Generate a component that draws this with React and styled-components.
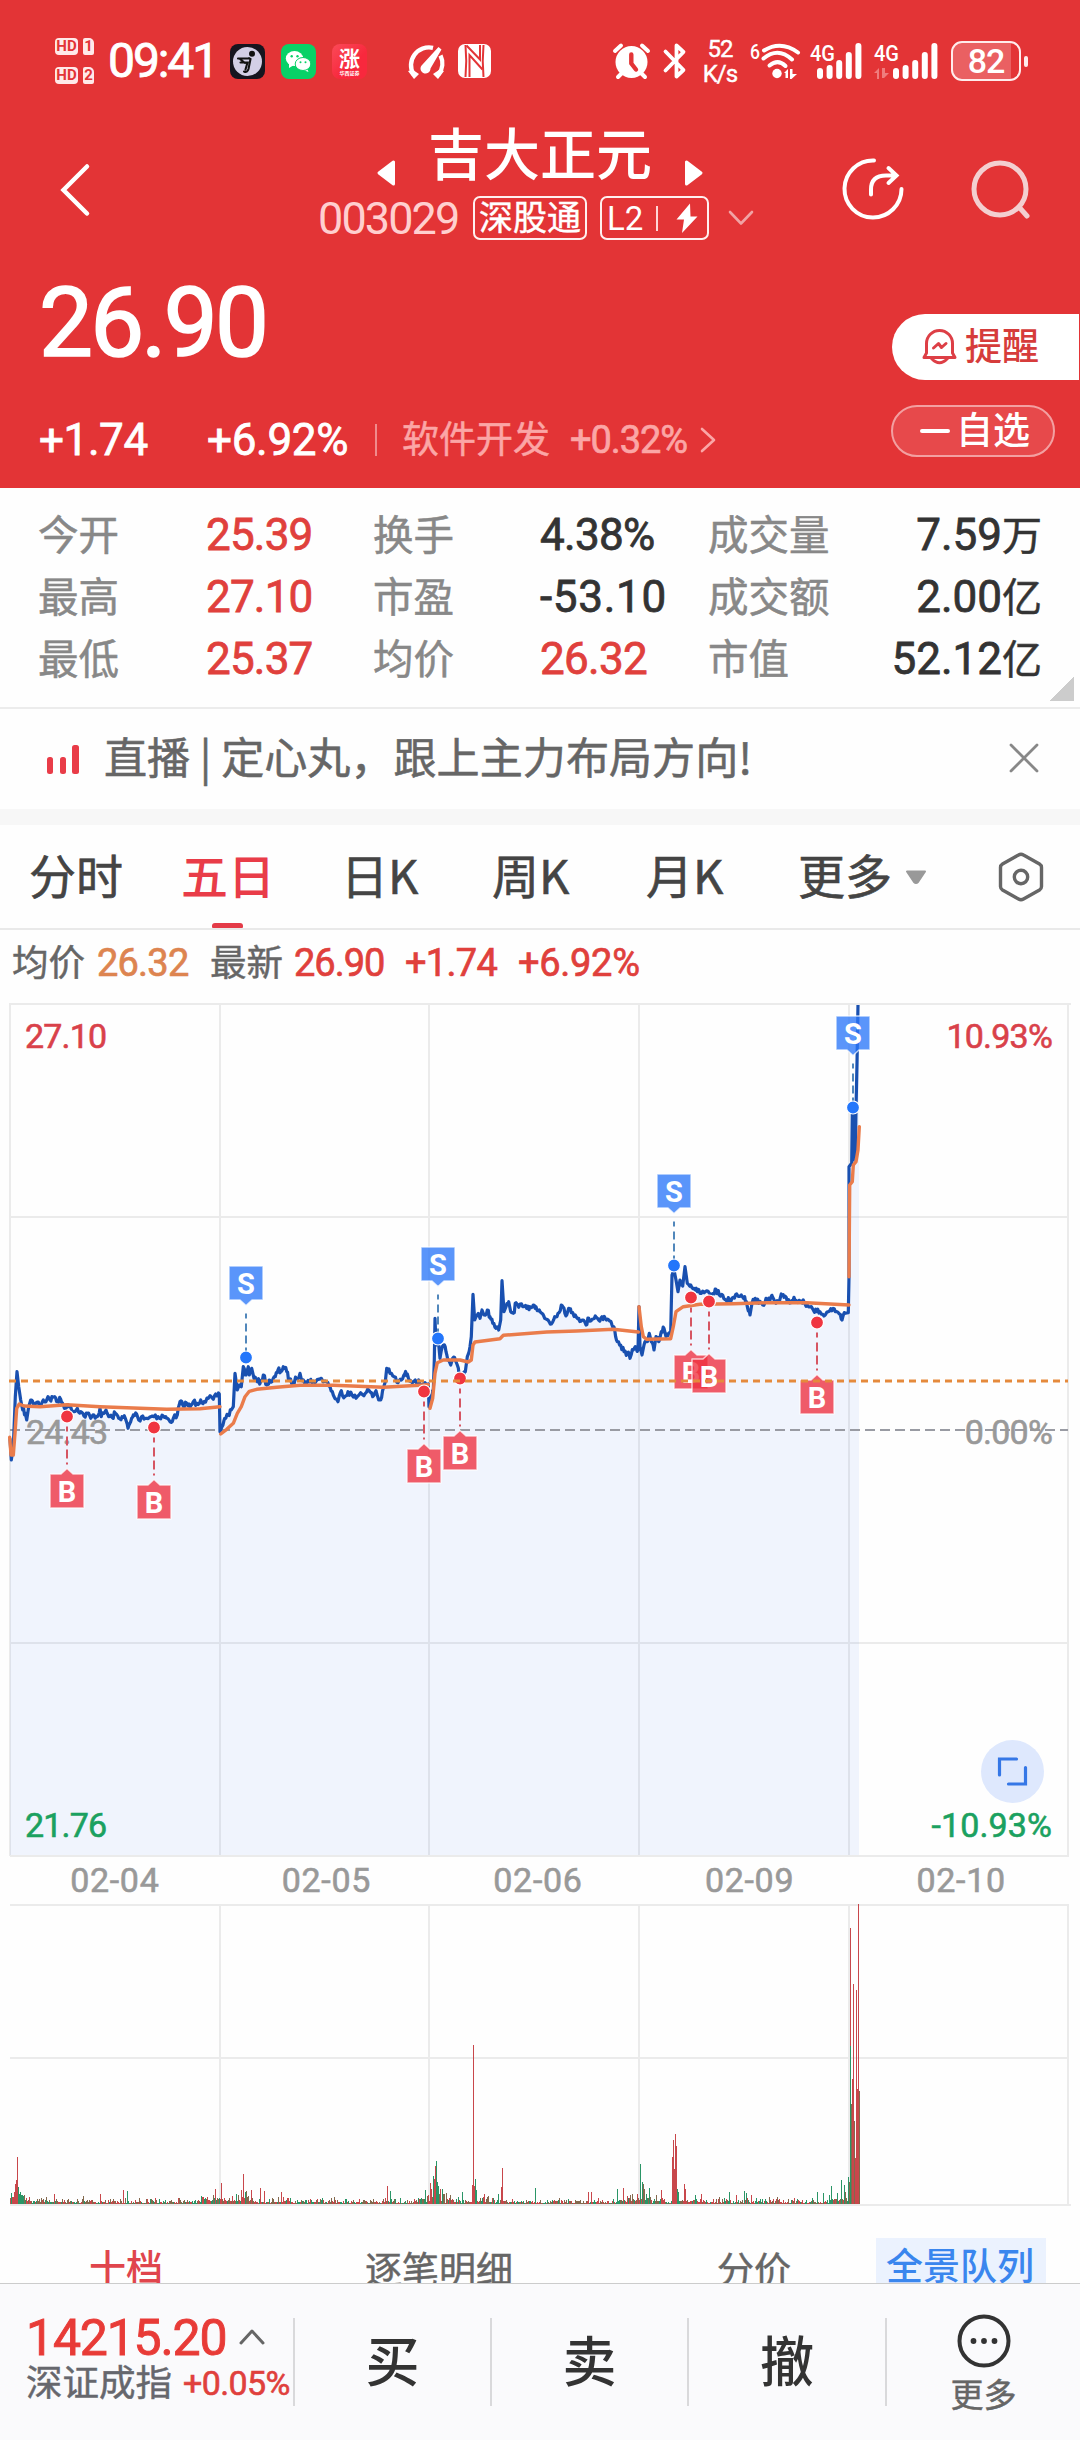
import React from 'react';
import styled, { createGlobalStyle } from 'styled-components';

const RED = '#e33436';

const GlobalStyle = createGlobalStyle`
    body {
        margin : 0;
        background : #fefefe;
        font-family : "Noto Sans CJK SC", sans-serif;
    }
    svg {
        display : block;
        flex : none;
        overflow : visible;
    }
`

const Page = styled('div')`
    width : 1080px;
    height : 2440px;
    display : flex;
    flex-direction : column;
    overflow : hidden;
`

/* digits, the thin stroke gives a weight between regular and medium */
const Num = styled('span')`
    display : block;
    flex : none;
    font-family : Roboto, sans-serif;
    font-weight : ${p => p.$weight || 400};
    font-size : ${p => p.$size}px;
    letter-spacing : ${p => p.$ls || 0}px;
    line-height : 1;
    white-space : nowrap;
    color : ${p => p.$color || 'inherit'};
    -webkit-text-stroke : ${p => p.$weight ? 0 : '0.018em'};
`

/* chinese text, the padding pulls the glyphs back to the middle of the line */
const Han = styled('span')`
    display : block;
    flex : none;
    font-weight : ${p => p.$weight || 400};
    font-size : ${p => p.$size}px;
    line-height : 1;
    padding-bottom : 0.11em;
    white-space : nowrap;
    color : ${p => p.$color || 'inherit'};
    -webkit-text-stroke : ${p => p.$weight ? 0 : '0.013em'};
`

const Header = styled('div')`
    height : 488px;
    flex : none;
    background : ${RED};
    color : #fff;
    display : flex;
    flex-direction : column;
`
const StatusBar = styled('div')`
    height : 122px;
    flex : none;
    display : flex;
    justify-content : space-between;
    align-items : center;
    padding : 0 52px 0 55px;
`
const StatusGroup = styled('div')`
    display : flex;
    align-items : center;
`
const SimStack = styled('div')`
    display : flex;
    flex-direction : column;
    gap : 12px;
    width : 53px;
`
const SimLine = styled('div')`
    display : flex;
    gap : 5px;
    color : ${RED};
    font : 700 15px/17px Roboto, sans-serif;
    text-align : center;
`
const HdTag = styled('span')`
    width : 23px;
    height : 17px;
    border-radius : 4px;
    background : #ffe9e9;
`
const SimTag = styled('span')`
    width : 11px;
    height : 17px;
    border-radius : 2px 5px 2px 2px;
    background : #ffe9e9;
`
const Clock = styled('div')`
    width : 122px;
`
const AppIcons = styled('div')`
    display : flex;
    gap : 16px;
    width : 175px;
`
const NfcBox = styled('div')`
    margin-left : 11px;
`
const BtBox = styled('div')`
    margin-left : 13px;
`
const SignalBox = styled('div')`
    margin : 0 12px 0 9px;
`
const Speed = styled('div')`
    display : flex;
    flex-direction : column;
    align-items : center;
    gap : 1px;
    width : 36px;
    margin : 0 12px 0 15px;
`
const Battery = styled('div')`
    width : 66px;
    height : 36px;
    margin-left : 12px;
    border : 2px solid #ffecec;
    border-radius : 11px;
    display : flex;
    align-items : center;
    justify-content : center;
    background : linear-gradient(to right, #ea6062 88%, ${RED} 88%);
`
const BatteryTip = styled('div')`
    width : 4px;
    height : 11px;
    margin-left : 3px;
    border-radius : 2px;
    background : #ffecec;
`

const TitleBar = styled('div')`
    height : 134px;
    flex : none;
    display : grid;
    grid-template-columns : 318px 524px 1fr;
`
const BackCell = styled('div')`
    padding : 41px 0 0 59px;
`
const TitleCell = styled('div')`
    display : flex;
    flex-direction : column;
`
const NameRow = styled('div')`
    height : 74px;
    width : 444px;
    display : flex;
    justify-content : center;
    gap : 33px;
`
const NameArrow = styled('div')`
    padding-top : 38px;
`
const NameText = styled('div')`
    padding-top : 1px;
`
const CodeRow = styled('div')`
    display : flex;
    align-items : center;
    height : 44px;
`
const CodeBox = styled('div')`
    width : 155px;
`
const Badge = styled('div')`
    box-sizing : border-box;
    width : ${p => p.$w}px;
    height : 44px;
    margin-right : 13px;
    border : 2px solid #fff0f0;
    border-radius : 7px;
    display : flex;
    align-items : center;
    justify-content : ${p => p.$between ? 'space-between' : 'center'};
    padding : 0 ${p => p.$between ? '9px 0 5px' : 0};
`
const BadgeLine = styled('div')`
    width : 2px;
    height : 25px;
    background : #ffd6d6;
    margin-right : 5px;
`
const DownBox = styled('div')`
    margin-left : 5px;
`
const ActionCell = styled('div')`
    display : flex;
    gap : 66px;
    padding-top : 36px;
`

const Quote = styled('div')`
    flex : 1;
    display : flex;
    justify-content : space-between;
`
const QuoteLeft = styled('div')`
    padding : 19px 0 0 39px;
`
const ChangeRow = styled('div')`
    display : grid;
    grid-template-columns : 168px 168px 27px 168px 129px 20px;
    align-items : center;
    height : 50px;
    margin-top : 44px;
`
const ThinLine = styled('div')`
    width : 2px;
    height : 32px;
    background : #f08b8c;
`
const QuoteRight = styled('div')`
    width : 189px;
    padding-top : 58px;
`
const AlertPill = styled('div')`
    box-sizing : border-box;
    width : 187px;
    height : 66px;
    margin-left : 1px;
    padding-left : 30px;
    border-radius : 33px 0 0 33px;
    background : #fff;
    color : #d63c3b;
    display : flex;
    align-items : center;
    gap : 8px;
`
const WatchPill = styled('div')`
    box-sizing : border-box;
    width : 164px;
    height : 52px;
    margin-top : 25px;
    padding-left : 27px;
    border : 2px solid #f3a0a1;
    border-radius : 26px;
    background : #e7494b;
    display : flex;
    align-items : center;
    gap : 6px;
`
const Dash = styled('div')`
    width : 30px;
    height : 4px;
    border-radius : 2px;
    background : #fff;
`

const Stats = styled('div')`
    box-sizing : border-box;
    height : 221px;
    flex : none;
    padding : 16px 38px 0 38px;
    border-bottom : 2px solid #ececec;
    display : grid;
    grid-template-columns : 168px 167px 167px 168px 1fr;
    grid-auto-rows : 62px;
    align-items : center;
    position : relative;
`
const StatValue = styled('div')`
    display : flex;
    align-items : center;
    justify-content : ${p => p.$end ? 'flex-end' : 'flex-start'};
    color : ${p => p.$red ? '#e0403c' : '#333'};
`
const StatRight = styled('div')`
    display : flex;
    justify-content : space-between;
    align-items : center;
`
const Corner = styled('div')`
    position : absolute;
    right : 6px;
    bottom : 6px;
    width : 25px;
    height : 25px;
    background : linear-gradient(135deg, transparent 50%, #ccc 50%);
`

const Notice = styled('div')`
    height : 100px;
    flex : none;
    box-sizing : border-box;
    display : flex;
    align-items : center;
    padding : 0 41px 2px 46px;
    color : #666;
`
const NoticeText = styled('div')`
    flex : 1;
    padding-left : 24px;
`
const Band = styled('div')`
    height : 16px;
    flex : none;
    background : #f7f7f7;
`

const Tabs = styled('div')`
    box-sizing : border-box;
    height : 105px;
    flex : none;
    border-bottom : 2px solid #e9e9e9;
    display : grid;
    grid-template-columns : 152px 160px 151px 154px 152px 200px 46px;
    padding-left : 29px;
`
const Tab = styled('div')`
    display : flex;
    align-items : center;
    gap : 13px;
    height : 103px;
    color : ${p => p.$active ? '#e93c48' : '#444'};
    position : relative;
`
const TabMark = styled('div')`
    position : absolute;
    left : 31px;
    bottom : 0;
    width : 31px;
    height : 5px;
    border-radius : 3px 3px 1px 1px;
    background : #e43b48;
`

const Legend = styled('div')`
    height : 70px;
    flex : none;
    box-sizing : border-box;
    padding : 0 0 4px 12px;
    display : grid;
    grid-template-columns : 85px 113px 84px 111px 113px 1fr;
    align-items : center;
    color : #666;
`

const Dates = styled('div')`
    height : 46px;
    flex : none;
    width : 1058px;
    margin-left : 9px;
    padding-bottom : 1px;
    display : flex;
    align-items : center;
`
const DateLabel = styled('div')`
    flex : 1;
    display : flex;
    justify-content : center;
`

const DepthTabs = styled('div')`
    height : 76px;
    flex : none;
    overflow : hidden;
    display : grid;
    grid-template-columns : 276px 352px 159px 170px;
    padding-left : 89px;
    color : #666;
`
const DepthTab = styled('div')`
    padding-top : ${p => p.$top || 43}px;
`
const DepthHot = styled('div')`
    margin-top : 31px;
    padding : 8px 0 0 10px;
    background : #ebf2fe;
    color : #3a86ee;
`

const BottomBar = styled('div')`
    flex : 1;
    box-sizing : border-box;
    border-top : 1px solid #ccc;
    background : #fafafc;
    display : grid;
    grid-template-columns : 293px 197px 197px 198px 1fr;
`
const IndexCell = styled('div')`
    padding : 29px 0 0 26px;
`
const IndexRow = styled('div')`
    display : flex;
    align-items : center;
    height : ${p => p.$h}px;
`
const IndexValue = styled('div')`
    width : 212px;
`
const IndexName = styled('div')`
    width : 157px;
`
const TradeCell = styled('div')`
    height : 88px;
    margin-top : 34px;
    border-left : 2px solid #d9d9db;
    display : flex;
    flex-direction : column;
    align-items : center;
    justify-content : center;
    color : #333;
`
const MoreBox = styled('div')`
    display : flex;
    flex-direction : column;
    align-items : center;
    gap : 9px;
    padding-top : 3px;
    color : #666;
`

/* ---------- icons ---------- */

const RunnerIcon = () => (
    <svg width="35" height="35" viewBox="0 0 35 35">
        <rect width="35" height="35" rx="8" fill="#16151f" />
        <circle cx="17.5" cy="17.5" r="14.5" fill="#d3cfe6" />
        <circle cx="22" cy="9.8" r="3" fill="#111" />
        <path d="M8 14.500h10.500M19 14l1.500 1-2 10q-1.200 4-4.500 2.500M10.500 18.500h7l-2 7M10 15l5 4" fill="none" stroke="#111" strokeWidth="2.100" strokeLinecap="round" />
    </svg>
)

const WechatIcon = () => (
    <svg width="35" height="35" viewBox="0 0 35 35">
        <rect width="35" height="35" rx="8" fill="#08d167" />
        <ellipse cx="13.500" cy="14.500" rx="8.700" ry="7.400" fill="#fff" />
        <path d="M8 19v5l5-3zM26 24.500l1.500 3.500-5-2z" fill="#fff" />
        <ellipse cx="22" cy="20" rx="7.800" ry="6.500" fill="#fff" stroke="#08d167" strokeWidth="1" />
        <g fill="#08d167">
            <circle cx="10.700" cy="12.200" r="1.200" />
            <circle cx="16.500" cy="12.200" r="1.200" />
            <circle cx="19.500" cy="18.300" r="1" />
            <circle cx="24.500" cy="18.300" r="1" />
        </g>
    </svg>
)

const RiseTile = styled('div')`
    width : 35px;
    height : 35px;
    border-radius : 8px;
    background : linear-gradient(135deg, #fb4a58, #f8283d 60%);
    display : flex;
    flex-direction : column;
    align-items : center;
    font-weight : 700;
    font-size : 21px;
    line-height : 26px;
`
const RiseSmall = styled('span')`
    font-size : 5px;
    line-height : 5px;
    white-space : nowrap;
`

const GaugeIcon = () => (
    <svg width="42" height="37" viewBox="0 0 42 37">
        <path d="M8.500 31.500A18 18 0 0 1 28 4.800M35.500 12.500A18 18 0 0 1 33.500 31.500" fill="none" stroke="#fff" strokeWidth="4.400" />
        <path d="M3 28l6 8 5-5-6-4zM39 28l-6 8-5-5 6-4z" fill="#fff" />
        <path d="M33.500 4l3 2.500-11 19a5 5 0 1 1-8-4z" fill="#fff" />
    </svg>
)

const NfcIcon = () => (
    <svg width="33" height="34" viewBox="0 0 33 34">
        <rect width="33" height="34" rx="7" fill="#fff" />
        <path d="M7.500 1q1.500 16 0 32M25.500 1q-1.500 16 0 32" fill="none" stroke={RED} strokeWidth="2" />
        <path d="M11.500 33V11l13 14.500M8.500 1.500l13.500 14V1" fill="none" stroke={RED} strokeWidth="2" />
    </svg>
)

const AlarmIcon = () => (
    <svg width="37" height="36" viewBox="0 0 37 36">
        <circle cx="18.500" cy="19" r="16" fill="#fff" />
        <path d="M2 8l6-5.500M35 8l-6-5.500M5 34l4-4M32 34l-4-4" stroke="#fff" strokeWidth="4" strokeLinecap="round" />
        <path d="M18.300 11.500v9l4.700 6" fill="none" stroke={RED} strokeWidth="4.400" strokeLinecap="round" strokeLinejoin="round" />
    </svg>
)

const BluetoothIcon = () => (
    <svg width="24" height="36" viewBox="0 0 24 36">
        <path d="M2.500 8.500l18 18.500-7 6.500v-31l7 6.500-18 18.500" fill="none" stroke="#fff" strokeWidth="3.800" strokeLinejoin="round" strokeLinecap="round" />
    </svg>
)

const WifiIcon = () => (
    <svg width="51" height="38" viewBox="0 0 51 38">
        <text x="0" y="17" fontFamily="Roboto" fontSize="21" fontWeight="500" fill="#fff" textLength="10" lengthAdjust="spacingAndGlyphs">6</text>
        <g fill="none" stroke="#fff" strokeWidth="4" strokeLinecap="round">
            <path d="M14 8.500Q31-2 48 10.500" />
            <path d="M13.500 16.500Q28 4.500 42 17.500" />
            <path d="M19.500 23.500Q28 16.500 35.500 24" />
        </g>
        <circle cx="27" cy="31.500" r="4.700" fill="#fff" />
        <path d="M34 31l4-4v9h-2.500v-5zM40 27h2.500v5h4.500l-5.500 5h-1.500z" fill="#fff" />
    </svg>
)

const SignalIcon = ({ wide }) => {
    const off = wide ? 12 : 0;
    return (
        <svg width={wide ? 65 : 52} height="37" viewBox={`0 0 ${wide ? 65 : 52} 37`}>
            <text x="0" y="18" fontFamily="Roboto" fontSize="22" fontWeight="500" fill="#fff" textLength="25" lengthAdjust="spacingAndGlyphs">4G</text>
            {wide && <path d="M0 30l5-5v11H3v-6zM8 25h3v5h4l-5 5H8z" fill="#ef7c7d" />}
            {[11, 14, 19, 27, 36].map((h, i) => (
                <rect key={h} x={7 + off + i * 9.6} y={36 - h} width="6" height={h} rx="3" fill="#fff" />
            ))}
        </svg>
    );
}

const BackIcon = () => (
    <svg width="32" height="54" viewBox="0 0 32 54">
        <path d="M28 3.500L4.500 27 28 50.500" fill="none" stroke="#fff" strokeWidth="4.500" strokeLinecap="round" />
    </svg>
)

const TriangleIcon = ({ flip }) => (
    <svg width="18" height="26" viewBox="0 0 18 26">
        <path d={flip ? 'M1.500 2v22L16 13z' : 'M16.500 2v22L2 13z'} fill="#fff" stroke="#fff" strokeWidth="3" strokeLinejoin="round" />
    </svg>
)

const BoltIcon = () => (
    <svg width="22" height="31" viewBox="0 0 22 31">
        <path d="M14 .500L.500 16.500h7.500l-2 13.500L21.500 13.500h-7z" fill="#fff" />
    </svg>
)

const ShareIcon = () => (
    <svg width="62" height="62" viewBox="0 0 62 62">
        <g fill="none" stroke="#fff" strokeLinecap="round" strokeWidth="4">
            <path d="M32 2.500A28.500 28.500 0 1 0 59.500 31" />
            <path d="M29 36.500v-5q0-14 15-14h9M46.500 10l8 7.500-8 7.500" />
        </g>
    </svg>
)

const SearchIcon = () => (
    <svg width="62" height="62" viewBox="0 0 62 62">
        <circle cx="30" cy="31" r="26" fill="none" stroke="#f3cfd0" strokeWidth="5" />
        <path d="M49 49l8 9" stroke="#f3cfd0" strokeWidth="5" strokeLinecap="round" />
    </svg>
)

const BellIcon = () => (
    <svg width="35" height="36" viewBox="0 0 35 36">
        <g fill="none" stroke="#dd3f46" strokeWidth="3" strokeLinejoin="round" strokeLinecap="round">
            <path d="M4.500 24V14.500a13 13 0 0 1 26 0V24l2.500 4.500H2z" />
            <path d="M9.500 29.500q8 8.500 16 0" />
            <path d="M11.500 19l5-4.500 3 4 4.500-4" />
        </g>
    </svg>
)

const Chevron = ({ w, h, d, color, sw }) => (
    <svg width={w} height={h} viewBox={`0 0 ${w} ${h}`}>
        <path d={d} fill="none" stroke={color} strokeWidth={sw} strokeLinecap="round" strokeLinejoin="round" />
    </svg>
)

const LiveIcon = () => (
    <svg width="34" height="30" viewBox="0 0 34 30">
        <g fill="#e93c48">
            <rect x="1" y="14" width="6" height="17" rx="2.500" />
            <rect x="14" y="14" width="6" height="17" rx="2.500" />
            <rect x="26" y="2" width="7" height="29" rx="2.500" />
        </g>
    </svg>
)

const HexIcon = () => (
    <svg width="46" height="50" viewBox="0 0 46 50">
        <path d="M20.500 3q2.500-1.500 5 0L41.500 12q2 1.200 2 3.500v19q0 2.300-2 3.500L25.500 47q-2.500 1.500-5 0L4.500 38q-2-1.200-2-3.500v-19q0-2.300 2-3.500z" fill="none" stroke="#666" strokeWidth="3.400" />
        <circle cx="23" cy="25" r="6.700" fill="none" stroke="#666" strokeWidth="3.400" />
    </svg>
)

const CaretIcon = () => (
    <svg width="22" height="15" viewBox="0 0 22 15">
        <path d="M2 2.500h18l-7 10.500q-2 2-4 0z" fill="#999" stroke="#999" strokeWidth="2" strokeLinejoin="round" />
    </svg>
)

const DotsIcon = () => (
    <svg width="54" height="54" viewBox="0 0 54 54">
        <circle cx="27" cy="27" r="24.500" fill="none" stroke="#333" strokeWidth="4" />
        {[16.5, 27, 37.5].map(x => <circle key={x} cx={x} cy="27" r="2.900" fill="#333" />)}
    </svg>
)

/* ---------- chart data, three ticks for each pixel ---------- */

const PRICE = [
    { ox: 0, oy: 200, pts: '30,715 34,780 40,740 46,590 51,515 56,560 62,600 68,630 76,640 80,660 86,620 92,600 100,612 112,606 120,615 130,600 138,605 144,590 150,600 158,592 164,590 172,605 182,598 190,615 200,622 212,620 222,635 232,625 242,635 252,648 262,640 272,655 282,645 292,650 300,625 304,650 312,640 318,630 326,650 336,652 346,640 356,655 366,650 376,655 384,685 392,665 400,645 410,643 416,660 428,648 440,655 452,650 466,645 478,655 490,648 500,655 510,665 520,655 532,645 540,605 548,615 560,610 570,622 580,605 590,610 602,600 612,605 625,595 640,598 650,588 658,582 660,695 666,680 674,655 684,645 694,630 700,620 705,520 712,570 718,555 724,560 730,500 738,525 745,500 748,525 755,505 762,535 772,545 782,545 790,525 800,555 808,540 816,545 826,530 834,510 842,515 850,500 860,515 868,540 878,550 890,535 900,520 910,540 920,550 932,538 945,548 964,535 980,545 990,560 1000,585 1014,605 1024,572 1034,590 1044,575 1056,585 1068,595 1082,578 1096,580 1106,570 1118,590 1128,572 1136,600 1142,600 1150,565 1156,545 1160,505 1170,520 1182,530 1194,548 1204,540 1214,522 1222,522 1232,542 1246,540 1260,552 1275,548 1285,552' },
    { ox: 400, oy: 160, pts: '87,740 92,720 100,690 103,600 105,475 108,555 115,540 120,595 130,555 138,575 146,600 152,615 158,595 166,600 172,615 180,655 188,640 196,635 202,590 210,560 214,530 219,403 224,480 232,465 240,475 246,450 252,465 262,450 270,470 278,490 288,505 296,510 302,480 306,362 312,455 318,440 326,425 332,455 340,460 348,428 356,442 368,440 380,445 390,440 400,435 408,440 418,450 426,460 434,475 444,480 454,492 464,470 474,460 484,435 492,445 500,465 506,445 514,458 526,465 536,475 546,480 558,495 566,475 576,478 586,468 596,480 606,470 616,475 626,480 636,495 644,510 652,545 662,555 672,575 682,580 690,595 700,570 706,560 714,570 717,440 720,560 726,585 732,555 740,545 748,520 754,545 762,570 768,530 776,545 784,515 792,505 798,530 806,520 812,515 816,345 822,330 828,360 834,395 840,360 848,378 855,320 862,370 872,375 882,385 892,395 904,400 916,395 928,400 940,400 948,388 958,405 968,405 978,420 988,420 1000,412 1010,402 1024,405 1034,410 1042,440 1050,465 1056,430 1066,415 1076,430 1088,435 1098,415 1110,420 1118,412 1128,430 1138,425 1144,402 1152,412 1162,425 1172,428 1182,412 1190,425 1200,422 1210,420 1222,435 1234,440 1240,450 1250,455 1260,455 1272,468 1284,455 1296,452 1306,455 1318,462 1326,480 1336,460 1345,458' },
    { ox: 700, oy: -20, pts: '447,890 447,560 455,550 457,400 460,540 463,400 466,530 468,390 471,250 474,75' },
];

const AVERAGE = [
    { ox: 0, oy: 200, pts: '29,712 33,765 40,765 45,700 50,625 58,612 72,618 120,620 200,614 300,620 400,624 500,628 600,626 660,620' },
    { ox: 0, oy: 200, pts: '662,702 680,688 700,670 712,640 724,620 735,590 748,574 770,568 830,562 900,556 1000,556 1150,562 1285,554' },
    { ox: 400, oy: 160, pts: '90,745 98,715 105,640 112,608 130,600 180,600 205,606 214,600 219,555 225,546 300,536 310,526 440,516 530,513 640,508 715,516' },
    { ox: 400, oy: 160, pts: '717,440 724,500 730,530 740,538 812,536 820,500 828,455 850,440 900,433 1000,431 1100,428 1220,428 1347,435' },
    { ox: 700, oy: -20, pts: '447,890 449,615 457,605 460,555 468,545 474,510 478,440' },
];

const toPoints = ({ ox, oy, pts }) => pts.split(' ').map(pair => {
    const [x, y] = pair.split(',').map(Number);
    return [ox + x / 3, oy + y / 3];
});

let seed = 7;
const random = () => {
    seed = (seed * 16807) % 2147483647;
    return seed / 2147483647;
}

// small ticks between two anchors
const roughen = points => {
    const out = [];
    points.forEach((p, i) => {
        out.push(p);
        const next = points[i + 1];
        if (next && next[0] - p[0] > 2.4 && p[0] < 845) {
            out.push([p[0] + (next[0] - p[0]) * 0.35, p[1] + (next[1] - p[1]) * 0.35 + (random() - 0.5) * 6]);
            out.push([p[0] + (next[0] - p[0]) * 0.7, p[1] + (next[1] - p[1]) * 0.7 + (random() - 0.5) * 6]);
        }
    });
    return out;
}

const toPath = points => 'M' + points.map(p => p[0].toFixed(1) + ' ' + p[1].toFixed(1)).join('L');

const priceLine = roughen(PRICE.flatMap(toPoints));
const pricePath = toPath(priceLine);
const areaPath = pricePath + 'H859V855H10Z';

const MARKERS = [
    ['B', 67, 416.5], ['B', 154, 427.5], ['S', 246, 357.5], ['B', 424, 391.5], ['S', 438, 338.5], ['B', 460, 378.5],
    ['S', 674, 265.5], ['B', 691, 297.5], ['B', 709, 301.5], ['B', 817, 322.5], ['S', 853, 107.5],
];

const DAYS_X = [220, 429, 639, 849];

const Marker = ({ type, x, y }) => {
    const sell = type === 'S';
    const color = sell ? '#2b77f8' : '#ee2f3f';
    const top = sell ? y - 91.5 : y + 57.5;
    const box = sell
        ? `M${x - 17} ${top}h34v34h-11l-6 5.500-6-5.500h-11z`
        : `M${x - 17} ${top}h11l6-5.500 6 5.500h11v34h-34z`;
    return (
        <g>
            <path
                d={sell ? `M${x} ${y - 44}V${y - 6}` : `M${x} ${y + 10}V${y + 48}`}
                stroke={sell ? '#5187bb' : '#d65562'}
                strokeWidth="2"
                strokeDasharray={sell ? '5 5 8 4 8 4' : '5 5 9 4 9 4'}
            />
            <circle cx={x} cy={y} r="6.500" fill={sell ? '#2376fb' : '#f03540'} stroke="#fff" strokeWidth="1.200" />
            <path d={box} fill={color} fillOpacity="0.78" stroke="#fff" strokeOpacity="0.7" strokeWidth="1.500" strokeLinejoin="round" />
            <text x={x} y={top + 27.5} textAnchor="middle" fontFamily="Roboto" fontSize="29" fontWeight="700" fill="#fff">{type}</text>
        </g>
    );
}

const AxisText = ({ x, y, end, ls, color, children }) => (
    <text
        x={x}
        y={y}
        textAnchor={end ? 'end' : 'start'}
        fontFamily="Roboto"
        fontSize="34"
        letterSpacing={ls || -0.8}
        fill={color}
        stroke={color}
        strokeWidth="0.600"
    >
        {children}
    </text>
)

const PriceChart = () => (
    <svg width="1080" height="857" viewBox="0 0 1080 857">
        <g stroke="#ebebeb" strokeWidth="2" shapeRendering="crispEdges">
            <path d="M9 4H1071M10 217H1068M10 643H1068M10 856H1069M10 4V856M1068 4V856" />
            {DAYS_X.map(x => <path key={x} d={`M${x} 4V856`} />)}
        </g>
        <path d={areaPath} fill="#3f74f5" fillOpacity="0.073" />
        <path d="M10 430H1068" stroke="#999ba3" strokeWidth="2" strokeDasharray="10 5" />
        <path d={pricePath} fill="none" stroke="#1950b0" strokeWidth="3.200" strokeLinejoin="round" />
        {AVERAGE.map((line, i) => (
            <path key={i} d={toPath(toPoints(line))} fill="none" stroke="#ea7c4b" strokeWidth="3.400" strokeLinejoin="round" strokeLinecap="round" />
        ))}
        <AxisText x={25} y={48} color="#d9414a">27.10</AxisText>
        <AxisText x={1052} y={48} end color="#d9414a">10.93%</AxisText>
        <AxisText x={26} y={444} color="#999">24.43</AxisText>
        <AxisText x={1052} y={444} end color="#999">0.00%</AxisText>
        <AxisText x={25} y={837} color="#1ba160">21.76</AxisText>
        <AxisText x={1052} y={837} end ls={0.1} color="#1ba160">-10.93%</AxisText>
        {MARKERS.map(([type, x, y]) => <Marker key={x} type={type} x={x} y={y} />)}
        <path d="M9 381H1068" stroke="#e58a3c" strokeWidth="3" strokeDasharray="7 5" />
        <circle cx="1012.500" cy="771.500" r="31.500" fill="#dee8fd" />
        <path d="M999.500 775V759H1016.500M1025.500 767.500V784H1008.500" fill="none" stroke="#3577e6" strokeWidth="3.200" strokeLinecap="round" />
    </svg>
)

const R = '#c8474b';
const G = '#2a9566';
const MIX = '#83694e';

const PEAKS = [
    [11, 11, G], [12, 7, R], [13, 7, R], [14, 12, R], [15, 20, R], [16, 24, R], [17, 47, R], [18, 17, G], [19, 10, G], [20, 12, G], [21, 9, G], [22, 9, G], [23, 6, G], [24, 9, MIX], [26, 6, R], [29, 7, R],
    [54, 10, R], [83, 8, MIX], [100, 10, R], [123, 14, R], [127, 13, G], [155, 6, R], [207, 7, R], [213, 9, MIX], [215, 15, R],
    [221, 21, R], [232, 8, R], [236, 10, G], [238, 9, MIX], [241, 14, R], [243, 30, R], [245, 12, G], [246, 13, MIX], [248, 8, MIX], [251, 14, R], [260, 16, R], [264, 13, R], [281, 12, R], [283, 7, R],
    [322, 6, G], [385, 6, R], [387, 18, R], [390, 13, G], [425, 14, G], [428, 9, R], [430, 21, R], [431, 15, R], [433, 28, G], [434, 25, R], [435, 38, R], [436, 43, G], [437, 22, G], [438, 18, G], [439, 10, MIX], [440, 15, R], [442, 15, G], [443, 10, MIX], [444, 10, MIX], [446, 11, MIX],
    [450, 9, MIX], [462, 12, G], [472, 19, R], [473, 159, R], [474, 18, R], [475, 25, G], [476, 14, G], [484, 10, R], [488, 8, MIX], [498, 10, G], [501, 17, R], [502, 36, R], [535, 16, G],
    [588, 12, R], [591, 12, R], [617, 15, G], [623, 16, R], [632, 10, MIX], [640, 40, G], [642, 22, G], [643, 20, MIX], [644, 15, MIX], [646, 10, G], [649, 16, G], [656, 9, MIX], [661, 14, R],
    [672, 47, R], [673, 64, R], [674, 35, R], [675, 70, R], [676, 58, R], [677, 15, G], [678, 12, G], [684, 20, R], [685, 15, R], [695, 9, G], [701, 10, R], [729, 12, G], [736, 9, R], [744, 13, G], [746, 11, G], [751, 9, R],
    [777, 7, MIX], [817, 12, G], [823, 11, G], [829, 9, G], [831, 18, G], [837, 11, G], [841, 24, G], [844, 19, G], [845, 12, MIX], [848, 27, G], [849, 22, MIX],
    [850, 276, R], [851, 100, MIX], [852, 125, R], [853, 220, R], [854, 83, MIX], [855, 46, R], [856, 214, R], [857, 115, R], [858, 300, R], [859, 113, MIX],
];

// quiet minutes between the peaks, busier near the open of a session
const quiet = [];
for (let x = 10; x < 848; x++) {
    const fromOpen = Math.min(...[10, 220, 429, 639].map(d => (x >= d ? x - d : 999)));
    const busy = 4 * Math.exp(-fromOpen / 35) + (fromOpen > 190 ? 4 : 0);
    const pick = random();
    const h = 1 + random() * random() * 6 + random() * busy;
    quiet.push([x, Math.round(h), pick < 0.38 ? R : pick < 0.66 ? G : MIX]);
}

const VolumeChart = () => (
    <svg width="1080" height="303" viewBox="0 0 1080 303" shapeRendering="crispEdges">
        <g stroke="#ebebeb" strokeWidth="2">
            <path d="M10 1H1069M10 154H1068M10 301H1071" />
            <path d="M1068 1V301" />
            {DAYS_X.map(x => <path key={x} d={`M${x} 1V301`} />)}
        </g>
        {quiet.concat(PEAKS).map(([x, h, color], i) => (
            <rect key={i} x={x} y={300 - h} width="1" height={h} fill={color} />
        ))}
        <rect x="850" y="142" width="1" height="158" fill={G} />
    </svg>
)

/* ---------- page ---------- */

const STATS = [
    ['今开', '25.39', true, '换手', '4.38%', false, '成交量', '7.59', '万'],
    ['最高', '27.10', true, '市盈', '-53.10', false, '成交额', '2.00', '亿'],
    ['最低', '25.37', true, '均价', '26.32', true, '市值', '52.12', '亿'],
];

class App extends React.Component{

    renderStatusBar(){
        return(
            <StatusBar>
                <StatusGroup>
                    <SimStack>
                        <SimLine><HdTag>HD</HdTag><SimTag>1</SimTag></SimLine>
                        <SimLine><HdTag>HD</HdTag><SimTag>2</SimTag></SimLine>
                    </SimStack>
                    <Clock><Num $size={48} $ls={-2.1}>09:41</Num></Clock>
                    <AppIcons>
                        <RunnerIcon />
                        <WechatIcon />
                        <RiseTile>涨<RiseSmall>华西证券</RiseSmall></RiseTile>
                    </AppIcons>
                    <GaugeIcon />
                    <NfcBox><NfcIcon /></NfcBox>
                </StatusGroup>
                <StatusGroup>
                    <AlarmIcon />
                    <BtBox><BluetoothIcon /></BtBox>
                    <Speed>
                        <Num $size={24} $ls={-1}>52</Num>
                        <Num $size={24} $ls={-1}>K/s</Num>
                    </Speed>
                    <WifiIcon />
                    <SignalBox><SignalIcon /></SignalBox>
                    <SignalIcon wide />
                    <Battery><Num $size={34} $ls={-1} $weight={500}>82</Num></Battery>
                    <BatteryTip />
                </StatusGroup>
            </StatusBar>
        )
    }

    renderTitle(){
        return(
            <TitleBar>
                <BackCell><BackIcon /></BackCell>
                <TitleCell>
                    <NameRow>
                        <NameArrow><TriangleIcon /></NameArrow>
                        <NameText><Han $size={56} $weight={500}>吉大正元</Han></NameText>
                        <NameArrow><TriangleIcon flip /></NameArrow>
                    </NameRow>
                    <CodeRow>
                        <CodeBox><Num $size={45} $ls={-1.9} $weight={400} $color="#ffcfcf">003029</Num></CodeBox>
                        <Badge $w={114}><Han $size={34}>深股通</Han></Badge>
                        <Badge $w={109} $between>
                            <Num $size={33} $weight={400}>L2</Num>
                            <BadgeLine />
                            <BoltIcon />
                        </Badge>
                        <DownBox><Chevron w={28} h={18} d="M3 3L14 14.500 25 3" color="#f1a3a4" sw={2.6} /></DownBox>
                    </CodeRow>
                </TitleCell>
                <ActionCell>
                    <ShareIcon />
                    <SearchIcon />
                </ActionCell>
            </TitleBar>
        )
    }

    renderQuote(){
        return(
            <Quote>
                <QuoteLeft>
                    <Num $size={96} $ls={-2.8}>26.90</Num>
                    <ChangeRow>
                        <Num $size={44} $ls={-0.4}>+1.74</Num>
                        <Num $size={44} $ls={-0.3}>+6.92%</Num>
                        <ThinLine />
                        <Han $size={37} $color="#fba6a6">软件开发</Han>
                        <Num $size={38} $ls={-1.1} $color="#fba6a6">+0.32%</Num>
                        <Chevron w={18} h={28} d="M3 3L15 14 3 25" color="#fba6a6" sw={2.6} />
                    </ChangeRow>
                </QuoteLeft>
                <QuoteRight>
                    <AlertPill>
                        <BellIcon />
                        <Han $size={37} $weight={500}>提醒</Han>
                    </AlertPill>
                    <WatchPill>
                        <Dash />
                        <Han $size={37} $weight={500}>自选</Han>
                    </WatchPill>
                </QuoteRight>
            </Quote>
        )
    }

    renderStats(){
        return(
            <Stats>
                {STATS.map(([a, av, ared, b, bv, bred, c, cv, unit]) => (
                    <React.Fragment key={a}>
                        <Han $size={40.5} $color="#888">{a}</Han>
                        <StatValue $red={ared}><Num $size={44} $ls={-0.8}>{av}</Num></StatValue>
                        <Han $size={40.5} $color="#888">{b}</Han>
                        <StatValue $red={bred}><Num $size={44} $ls={bv[0] === '-' ? 0.7 : -0.7}>{bv}</Num></StatValue>
                        <StatRight>
                            <Han $size={40.5} $color="#888">{c}</Han>
                            <StatValue $end><Num $size={44}>{cv}</Num><Han $size={40}>{unit}</Han></StatValue>
                        </StatRight>
                    </React.Fragment>
                ))}
                <Corner />
            </Stats>
        )
    }

    renderTabs(){
        return(
            <Tabs>
                <Tab><Han $size={47}>分时</Han></Tab>
                <Tab $active><Han $size={47} $weight={500}>五日</Han><TabMark /></Tab>
                <Tab><Han $size={47}>日K</Han></Tab>
                <Tab><Han $size={47}>周K</Han></Tab>
                <Tab><Han $size={47}>月K</Han></Tab>
                <Tab><Han $size={47}>更多</Han><CaretIcon /></Tab>
                <Tab><HexIcon /></Tab>
            </Tabs>
        )
    }

    render(){
        return(
            <Page>
                <GlobalStyle />
                <Header>
                    {this.renderStatusBar()}
                    {this.renderTitle()}
                    {this.renderQuote()}
                </Header>
                {this.renderStats()}
                <Notice>
                    <LiveIcon />
                    <NoticeText><Han $size={43.1}>直播 | 定心丸，跟上主力布局方向!</Han></NoticeText>
                    <Chevron w={30} h={30} d="M2 2L28 28M28 2L2 28" color="#888" sw={2.8} />
                </Notice>
                <Band />
                {this.renderTabs()}
                <Legend>
                    <Han $size={36.5}>均价</Han>
                    <Num $size={38} $ls={-0.8} $color="#dd8450">26.32</Num>
                    <Han $size={36.5}>最新</Han>
                    <Num $size={38} $ls={-1} $color="#e0403c">26.90</Num>
                    <Num $size={38} $ls={-0.7} $color="#e0403c">+1.74</Num>
                    <Num $size={38} $ls={-0.3} $color="#e0403c">+6.92%</Num>
                </Legend>
                <PriceChart />
                <Dates>
                    {['02-04', '02-05', '02-06', '02-09', '02-10'].map(day => (
                        <DateLabel key={day}><Num $size={34} $ls={0.7} $color="#999">{day}</Num></DateLabel>
                    ))}
                </Dates>
                <VolumeChart />
                <DepthTabs>
                    <DepthTab $top={41}><Han $size={37} $weight={500} $color="#e0454c">十档</Han></DepthTab>
                    <DepthTab><Han $size={37}>逐笔明细</Han></DepthTab>
                    <DepthTab><Han $size={37}>分价</Han></DepthTab>
                    <DepthHot><Han $size={37} $weight={500}>全景队列</Han></DepthHot>
                </DepthTabs>
                <BottomBar>
                    <IndexCell>
                        <IndexRow $h={50}>
                            <IndexValue><Num $size={50} $ls={-1.2} $color="#e83b37">14215.20</Num></IndexValue>
                            <Chevron w={28} h={18} d="M3 14L14 2 25 14" color="#666" sw={3} />
                        </IndexRow>
                        <IndexRow $h={40}>
                            <IndexName><Han $size={36.5} $color="#66676d">深证成指</Han></IndexName>
                            <Num $size={34} $ls={-0.6} $color="#e0403c">+0.05%</Num>
                        </IndexRow>
                    </IndexCell>
                    <TradeCell><Han $size={54} $weight={500}>买</Han></TradeCell>
                    <TradeCell><Han $size={54} $weight={500}>卖</Han></TradeCell>
                    <TradeCell><Han $size={54} $weight={500}>撤</Han></TradeCell>
                    <TradeCell>
                        <MoreBox>
                            <DotsIcon />
                            <Han $size={33}>更多</Han>
                        </MoreBox>
                    </TradeCell>
                </BottomBar>
            </Page>
        )
    }
}

export default App
